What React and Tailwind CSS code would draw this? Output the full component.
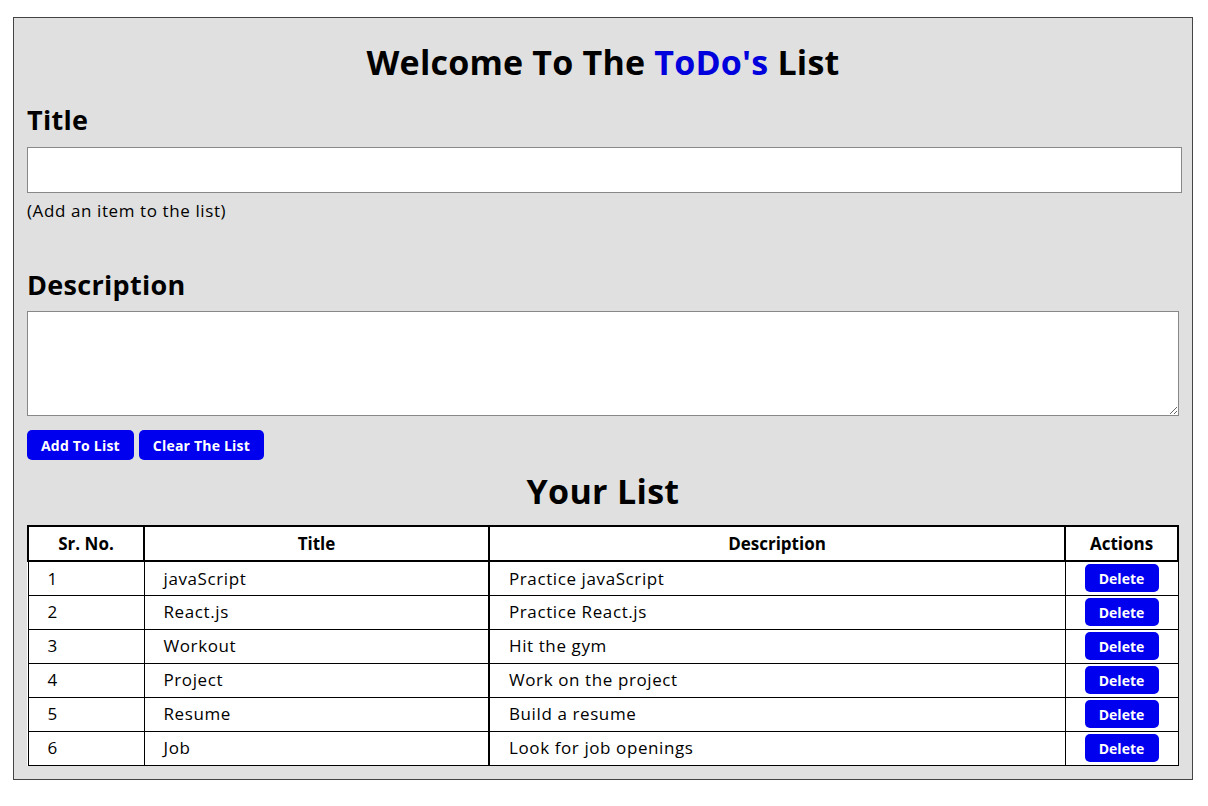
import React from "react";

const todos = [
  { sno: 1, title: "javaScript", desc: "Practice javaScript" },
  { sno: 2, title: "React.js", desc: "Practice React.js" },
  { sno: 3, title: "Workout", desc: "Hit the gym" },
  { sno: 4, title: "Project", desc: "Work on the project" },
  { sno: 5, title: "Resume", desc: "Build a resume" },
  { sno: 6, title: "Job", desc: "Look for job openings" },
];

function App() {
  return (
    <div className="min-h-screen bg-white pt-[17px] px-[13px] text-black" style={{ fontFamily: '"Open Sans", "Noto Sans", sans-serif' }}>
      <div className="w-[1180px] bg-[#e0e0e0] border border-[#444] px-[13px] pt-[22px] pb-[13px]">
        <h1 className="text-center text-[34px] font-bold leading-[44px] tracking-[0.2px]">
          Welcome To The <span className="text-[#0000dd]">ToDo's</span> List
        </h1>

        <div className="mt-[18px]">
          <label className="block text-[27px] font-bold leading-[36px] tracking-[0.3px]">Title</label>
          <input type="text" className="mt-[9px] block w-[1155px] h-[46px] bg-white border border-[#888]" />
          <p className="mt-[6px] text-[17px] leading-[24px] tracking-[0.6px]">(Add an item to the list)</p>
        </div>

        <div className="mt-[44px]">
          <label className="block text-[27px] font-bold leading-[36px] tracking-[0.3px]">Description</label>
          <textarea className="mt-[8px] block w-[1152px] h-[105px] bg-white border border-[#888]" />
        </div>

        <div className="flex gap-[5px] mt-[14px]">
          <button className="h-[30px] px-[14px] rounded-[5px] bg-[#0000ee] text-white text-[14px] font-bold tracking-[0.2px]">Add To List</button>
          <button className="h-[30px] px-[14px] rounded-[5px] bg-[#0000ee] text-white text-[14px] font-bold tracking-[0.2px]">Clear The List</button>
        </div>

        <h2 className="text-center text-[34px] font-bold leading-[44px] mt-[9px] tracking-[0.3px]">Your List</h2>

        <table className="mt-[12px] w-[1152px] border-collapse bg-white text-[17px] tracking-[0.6px]">
          <thead>
            <tr className="h-[35px]">
              <th className="w-[116px] border-2 border-black font-bold tracking-normal">Sr. No.</th>
              <th className="w-[345px] border-2 border-black font-bold tracking-normal">Title</th>
              <th className="w-[576px] border-2 border-black font-bold tracking-normal">Description</th>
              <th className="border-2 border-black font-bold tracking-normal">Actions</th>
            </tr>
          </thead>
          <tbody>
            {todos.map((t) => (
              <tr key={t.sno} className="h-[34px]">
                <td className="border border-black pl-[19px]">{t.sno}</td>
                <td className="border border-black pl-[19px]">{t.title}</td>
                <td className="border-y border-l-2 border-r border-black pl-[19px]">{t.desc}</td>
                <td className="border border-black text-center">
                  <button className="w-[74px] h-[28px] rounded-[5px] bg-[#0000ee] text-white text-[14px] font-bold tracking-normal align-middle">Delete</button>
                </td>
              </tr>
            ))}
          </tbody>
        </table>
      </div>
    </div>
  );
}

export default App;
